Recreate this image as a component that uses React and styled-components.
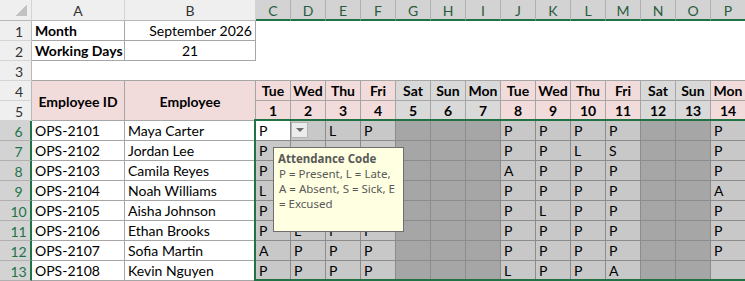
import styled, { createGlobalStyle } from 'styled-components'


const GREEN = '#217346'
const LINE = '#a6a6a6'
const GRID = '#8c8c8c'

const columns = ['A', 'B', 'C', 'D', 'E', 'F', 'G', 'H', 'I', 'J', 'K', 'L', 'M', 'N', 'O', 'P']

const days = [
	{ name: 'Tue', num: 1 },
	{ name: 'Wed', num: 2 },
	{ name: 'Thu', num: 3 },
	{ name: 'Fri', num: 4 },
	{ name: 'Sat', num: 5, off: true },
	{ name: 'Sun', num: 6, off: true },
	{ name: 'Mon', num: 7, off: true },
	{ name: 'Tue', num: 8 },
	{ name: 'Wed', num: 9 },
	{ name: 'Thu', num: 10 },
	{ name: 'Fri', num: 11 },
	{ name: 'Sat', num: 12, off: true },
	{ name: 'Sun', num: 13, off: true },
	{ name: 'Mon', num: 14 },
]

// cells under the comment box (D7:F10) are hidden in the sheet, left blank
const employees = [
	['OPS-2101', 'Maya Carter', 'P', '', 'L', 'P', '', '', '', 'P', 'P', 'P', 'P', '', '', 'P'],
	['OPS-2102', 'Jordan Lee', 'P', '', '', '', '', '', '', 'P', 'P', 'L', 'S', '', '', 'P'],
	['OPS-2103', 'Camila Reyes', 'P', '', '', '', '', '', '', 'A', 'P', 'P', 'P', '', '', 'P'],
	['OPS-2104', 'Noah Williams', 'L', '', '', '', '', '', '', 'P', 'P', 'P', 'P', '', '', 'A'],
	['OPS-2105', 'Aisha Johnson', 'P', '', '', '', '', '', '', 'P', 'L', 'P', 'P', '', '', 'P'],
	['OPS-2106', 'Ethan Brooks', 'P', 'L', 'P', 'P', '', '', '', 'P', 'P', 'P', 'P', '', '', 'P'],
	['OPS-2107', 'Sofia Martin', 'A', 'P', 'P', 'P', '', '', '', 'P', 'P', 'P', 'P', '', '', 'P'],
	['OPS-2108', 'Kevin Nguyen', 'P', 'P', 'P', 'P', '', '', '', 'L', 'P', 'P', 'A', '', '', ''],
]


const App = () => {
	return (
		<>
			<GlobalStyle />
			<Sheet>
				<Corner><CornerMark /></Corner>
				{columns.map((c, i) => (
					<ColHead key={c} selected={i >= 2}>{c}</ColHead>
				))}

				<RowHead>1</RowHead>
				<Label>Month</Label>
				<Value align="right">September 2026</Value>
				<EmptyArea />

				<RowHead>2</RowHead>
				<Label>Working Days</Label>
				<Value align="center">21</Value>

				<RowHead>3</RowHead>
				<Spacer />

				<RowHead>4</RowHead>
				<Title>Employee ID</Title>
				<Title>Employee</Title>
				{days.map(d => (
					<DayCell key={'n' + d.num} off={d.off}>{d.name}</DayCell>
				))}

				<RowHead>5</RowHead>
				{days.map(d => (
					<DayCell key={'d' + d.num} off={d.off}>{d.num}</DayCell>
				))}

				{employees.map((row, r) => (
					<Row key={row[0]} index={r} row={row} />
				))}

				<Selection />
				<DropButton><Arrow /></DropButton>
				<Comment>
					<strong>Attendance Code</strong>
					<span>P = Present, L = Late,</span>
					<span>A = Absent, S = Sick, E</span>
					<span>= Excused</span>
				</Comment>
			</Sheet>
		</>
	)
}

const Row = ({ index, row }) => (
	<>
		<RowHead selected>{index + 6}</RowHead>
		<BodyCell>{row[0]}</BodyCell>
		<BodyCell>{row[1]}</BodyCell>
		{row.slice(2).map((mark, i) => (
			<Mark
				key={i}
				off={days[i].off}
				active={index === 0 && i === 0}
			>
				{mark}
			</Mark>
		))}
	</>
)


export default App



const GlobalStyle = createGlobalStyle`
	body {
		margin: 0;
		background: #ffffff;
		overflow: hidden;
	}
`

const Sheet = styled.div`
	position: relative;
	width: 746px;
	display: grid;
	grid-template-columns: 32px 93px 131px repeat(14, 35px);
	grid-template-rows: 21px repeat(13, 20px);
	font-family: Lato, "Liberation Sans", sans-serif;
	font-size: 14px;
	color: #000000;
	box-sizing: border-box;

	& > div {
		box-sizing: border-box;
	}
`

const Corner = styled.div`
	display: flex;
	align-items: flex-end;
	justify-content: flex-end;
	padding: 0 4px 4px 0;
	background: #efefef;
	border-right: 1px solid #d4d4d4;
	border-bottom: 1px solid #b8b8b8;
`

const CornerMark = styled.span`
	width: 12px;
	height: 11px;
	background: linear-gradient(to bottom right, transparent 50%, #c2c2c2 50%);
`

const ColHead = styled.div`
	display: flex;
	align-items: center;
	justify-content: center;
	padding-top: 1px;
	background: ${p => p.selected ? '#d3d3d3' : '#efefef'};
	color: ${p => p.selected ? '#2a5b3e' : '#333333'};
	border-right: 1px solid ${p => p.selected ? '#b0b0b0' : '#d4d4d4'};
	border-bottom: ${p => p.selected ? `2px solid ${GREEN}` : '1px solid #b8b8b8'};
`

const RowHead = styled.div`
	grid-column: 1;
	line-height: 19px;
	padding: 1px 0 0 7px;
	text-align: center;
	background: ${p => p.selected ? '#d3d3d3' : '#efefef'};
	color: ${p => p.selected ? GREEN : '#333333'};
	border-right: ${p => p.selected ? `2px solid ${GREEN}` : '1px solid #b8b8b8'};
	border-bottom: 1px solid ${p => p.selected ? '#b0b0b0' : '#d4d4d4'};
`

const Label = styled.div`
	padding: 1px 0 0 3px;
	line-height: 18px;
	font-weight: bold;
	white-space: nowrap;
	border-right: 1px solid ${LINE};
	border-bottom: 1px solid ${LINE};
`

const Value = styled.div`
	padding: 1px 3px 0 3px;
	line-height: 18px;
	text-align: ${p => p.align};
	white-space: nowrap;
	border-right: 1px solid ${LINE};
	border-bottom: 1px solid ${LINE};
`

const EmptyArea = styled.div`
	grid-column: 4 / -1;
	grid-row: 2 / span 2;
`

const Spacer = styled.div`
	grid-column: 2 / -1;
	border-bottom: 1px solid ${LINE};
`

const Title = styled.div`
	grid-row: span 2;
	display: flex;
	align-items: center;
	justify-content: center;
	padding-top: 2px;
	font-weight: bold;
	background: #f2dcdb;
	border-right: 1px solid ${LINE};
	border-bottom: 1px solid ${LINE};
`

const DayCell = styled.div`
	padding-top: 1px;
	line-height: 18px;
	text-align: center;
	font-weight: bold;
	background: ${p => p.off ? '#d9d9d9' : '#f2dcdb'};
	border-right: 1px solid ${LINE};
	border-bottom: 1px solid ${LINE};
`

const BodyCell = styled.div`
	padding: 1px 0 0 3px;
	line-height: 18px;
	white-space: nowrap;
	border-right: 1px solid ${LINE};
	border-bottom: 1px solid ${LINE};
`

const Mark = styled.div`
	padding: 1px 0 0 3px;
	line-height: 18px;
	background: ${p => p.active ? '#ffffff' : p.off ? '#a6a6a6' : '#c8c8c8'};
	border-right: 1px solid ${GRID};
	border-bottom: 1px solid ${GRID};
`

const Selection = styled.div`
	position: absolute;
	left: 254px;
	top: 119px;
	width: 500px;
	height: 162px;
	border: 2px solid ${GREEN};
	box-sizing: border-box;
	pointer-events: none;
`

const DropButton = styled.div`
	position: absolute;
	left: 291px;
	top: 122px;
	width: 17px;
	height: 16px;
	display: flex;
	align-items: center;
	justify-content: center;
	background: #ececec;
	border: 1px solid #b4b4b4;
	box-sizing: border-box;
`

const Arrow = styled.span`
	width: 0;
	height: 0;
	border-left: 4px solid transparent;
	border-right: 4px solid transparent;
	border-top: 4px solid #6a6a6a;
`

const Comment = styled.div`
	position: absolute;
	left: 273px;
	top: 147px;
	width: 131px;
	height: 85px;
	padding: 3px 0 0 5px;
	display: flex;
	flex-direction: column;
	background: #ffffe1;
	border: 1px solid #6e6e6e;
	box-sizing: border-box;
	font-family: "Noto Sans", "Open Sans", sans-serif;
	font-size: 11.5px;
	line-height: 15px;
	color: #595959;
	white-space: nowrap;

	strong {
		font-weight: bold;
		margin-left: -1px;
	}
`
